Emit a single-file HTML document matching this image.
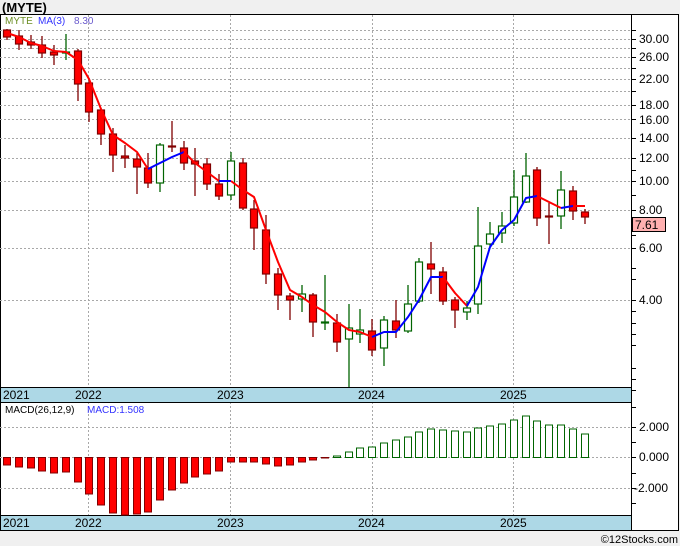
<!DOCTYPE html>
<html><head><style>
html,body{margin:0;padding:0;background:#f0f0f0;}
svg{display:block;font-family:"Liberation Sans","DejaVu Sans",sans-serif;}
</style></head><body>
<svg width="680" height="546" viewBox="0 0 680 546" xmlns="http://www.w3.org/2000/svg">
<rect x="0" y="0" width="680" height="546" fill="#f0f0f0"/>
<text x="2" y="12" font-size="13" font-weight="bold" fill="#000">(MYTE)</text>
<rect x="0.5" y="14.5" width="678" height="516" fill="#fff" stroke="#000"/>
<line x1="631.5" y1="14" x2="631.5" y2="531" stroke="#000"/>
<!-- main grid -->
<g stroke="#a8a8a8" stroke-dasharray="2,2" stroke-width="1">
<line x1="0" y1="30.5" x2="631" y2="30.5"/><line x1="0" y1="39.5" x2="631" y2="39.5"/><line x1="0" y1="48.5" x2="631" y2="48.5"/><line x1="0" y1="57.5" x2="631" y2="57.5"/><line x1="0" y1="68.5" x2="631" y2="68.5"/><line x1="0" y1="79.5" x2="631" y2="79.5"/><line x1="0" y1="91.5" x2="631" y2="91.5"/><line x1="0" y1="105.5" x2="631" y2="105.5"/><line x1="0" y1="119.5" x2="631" y2="119.5"/><line x1="0" y1="138.5" x2="631" y2="138.5"/><line x1="0" y1="158.5" x2="631" y2="158.5"/><line x1="0" y1="181.5" x2="631" y2="181.5"/><line x1="0" y1="210.5" x2="631" y2="210.5"/><line x1="0" y1="248.5" x2="631" y2="248.5"/><line x1="0" y1="300.5" x2="631" y2="300.5"/>
<line x1="88.5" y1="15" x2="88.5" y2="387"/><line x1="230.5" y1="15" x2="230.5" y2="387"/><line x1="372.5" y1="15" x2="372.5" y2="387"/><line x1="513.5" y1="15" x2="513.5" y2="387"/>
<line x1="0" y1="427.5" x2="631" y2="427.5"/><line x1="0" y1="457.5" x2="631" y2="457.5"/><line x1="0" y1="488.5" x2="631" y2="488.5"/>
<line x1="88.5" y1="402" x2="88.5" y2="515"/><line x1="230.5" y1="402" x2="230.5" y2="515"/><line x1="372.5" y1="402" x2="372.5" y2="515"/><line x1="513.5" y1="402" x2="513.5" y2="515"/>
</g>
<!-- axis ticks -->
<g stroke="#000">
<line x1="631" y1="30.5" x2="636" y2="30.5"/><line x1="631" y1="39.5" x2="636" y2="39.5"/><line x1="631" y1="48.5" x2="636" y2="48.5"/><line x1="631" y1="57.5" x2="636" y2="57.5"/><line x1="631" y1="68.5" x2="636" y2="68.5"/><line x1="631" y1="79.5" x2="636" y2="79.5"/><line x1="631" y1="91.5" x2="636" y2="91.5"/><line x1="631" y1="105.5" x2="636" y2="105.5"/><line x1="631" y1="119.5" x2="636" y2="119.5"/><line x1="631" y1="138.5" x2="636" y2="138.5"/><line x1="631" y1="158.5" x2="636" y2="158.5"/><line x1="631" y1="170.5" x2="636" y2="170.5"/><line x1="631" y1="181.5" x2="636" y2="181.5"/><line x1="631" y1="195.5" x2="636" y2="195.5"/><line x1="631" y1="210.5" x2="636" y2="210.5"/><line x1="631" y1="235.5" x2="636" y2="235.5"/><line x1="631" y1="248.5" x2="636" y2="248.5"/><line x1="631" y1="268.5" x2="636" y2="268.5"/><line x1="631" y1="279.5" x2="636" y2="279.5"/><line x1="631" y1="300.5" x2="636" y2="300.5"/><line x1="631" y1="311.5" x2="636" y2="311.5"/><line x1="631" y1="323.5" x2="636" y2="323.5"/><line x1="631" y1="334.5" x2="636" y2="334.5"/><line x1="631" y1="345.5" x2="636" y2="345.5"/><line x1="631" y1="368.5" x2="636" y2="368.5"/><line x1="631" y1="379.5" x2="636" y2="379.5"/><line x1="631" y1="390.5" x2="636" y2="390.5"/>
<line x1="631" y1="407.5" x2="636" y2="407.5"/><line x1="631" y1="427.5" x2="636" y2="427.5"/><line x1="631" y1="442.5" x2="636" y2="442.5"/><line x1="631" y1="457.5" x2="636" y2="457.5"/><line x1="631" y1="473.5" x2="636" y2="473.5"/><line x1="631" y1="488.5" x2="636" y2="488.5"/><line x1="631" y1="503.5" x2="636" y2="503.5"/>
</g>
<g font-size="12" fill="#000">
<text x="639" y="43">30.00</text><text x="639" y="61">26.00</text><text x="639" y="83">22.00</text><text x="639" y="109">18.00</text><text x="639" y="124">16.00</text><text x="639" y="142">14.00</text><text x="639" y="162">12.00</text><text x="639" y="185">10.00</text><text x="639" y="214">8.00</text><text x="639" y="252">6.00</text><text x="639" y="304">4.00</text>
<text x="639" y="431">2.000</text><text x="639" y="461">0.000</text><text x="634" y="492">-2.000</text>
</g>
<rect x="632.5" y="217.5" width="33" height="14" fill="#ffb0b0" stroke="#000"/>
<text x="635" y="229" font-size="12" fill="#000">7.61</text>
<!-- legend -->
<text x="5" y="24" font-size="10" fill="#6b8e23">MYTE</text>
<text x="38" y="24" font-size="10" fill="#3333ff">MA(3)</text>
<text x="74" y="24" font-size="10" fill="#6a5acd">8.30</text>
<!-- wicks -->
<g stroke-width="1.3">
<g stroke="#800000">
<line x1="7" y1="29" x2="7" y2="40"/><line x1="19" y1="30" x2="19" y2="50"/><line x1="31" y1="35" x2="31" y2="49"/><line x1="42" y1="36" x2="42" y2="58"/><line x1="54" y1="45" x2="54" y2="65"/>
<line x1="78" y1="49" x2="78" y2="101"/><line x1="89" y1="78" x2="89" y2="122"/><line x1="101" y1="108" x2="101" y2="145"/><line x1="113" y1="128" x2="113" y2="172"/><line x1="125" y1="145" x2="125" y2="168"/><line x1="137" y1="153" x2="137" y2="194"/><line x1="148" y1="153" x2="148" y2="188"/>
<line x1="172" y1="121" x2="172" y2="152"/><line x1="184" y1="141" x2="184" y2="170"/><line x1="195" y1="148" x2="195" y2="196"/><line x1="207" y1="158" x2="207" y2="190"/><line x1="219" y1="174" x2="219" y2="200"/>
<line x1="243" y1="158" x2="243" y2="210"/><line x1="254" y1="200" x2="254" y2="250"/><line x1="266" y1="215" x2="266" y2="284"/><line x1="278" y1="268" x2="278" y2="310"/><line x1="290" y1="293" x2="290" y2="320"/><line x1="313" y1="293" x2="313" y2="337"/><line x1="337" y1="314" x2="337" y2="352"/><line x1="372" y1="319" x2="372" y2="356"/><line x1="396" y1="300" x2="396" y2="338"/><line x1="431" y1="242" x2="431" y2="294"/><line x1="443" y1="267" x2="443" y2="305"/><line x1="455" y1="297" x2="455" y2="328"/><line x1="537" y1="167" x2="537" y2="226"/><line x1="549" y1="203" x2="549" y2="244"/><line x1="573" y1="186" x2="573" y2="220"/><line x1="585" y1="209" x2="585" y2="224"/>
</g>
<g stroke="#006400">
<line x1="66" y1="34" x2="66" y2="60"/><line x1="160" y1="143" x2="160" y2="192"/><line x1="231" y1="152" x2="231" y2="200"/><line x1="302" y1="285" x2="302" y2="312"/><line x1="325" y1="275" x2="325" y2="330"/><line x1="349" y1="304" x2="349" y2="387"/><line x1="360" y1="309" x2="360" y2="343"/><line x1="384" y1="316" x2="384" y2="366"/><line x1="408" y1="285" x2="408" y2="333"/><line x1="419" y1="258" x2="419" y2="303"/><line x1="467" y1="301" x2="467" y2="320"/><line x1="478" y1="207" x2="478" y2="314"/><line x1="490" y1="222" x2="490" y2="246"/><line x1="502" y1="212" x2="502" y2="243"/><line x1="514" y1="170" x2="514" y2="226"/><line x1="526" y1="153" x2="526" y2="203"/><line x1="561" y1="171" x2="561" y2="229"/>
</g>
</g>
<!-- bodies -->
<g fill="#ff0000" stroke="#800000" stroke-width="1.2">
<rect x="3.5" y="30" width="7" height="7"/><rect x="15.5" y="36" width="7" height="8"/><rect x="27.5" y="42" width="7" height="3"/><rect x="38.5" y="45" width="7" height="8"/><rect x="50.5" y="52" width="7" height="3"/>
<rect x="74.5" y="51" width="7" height="33"/><rect x="85.5" y="83" width="7" height="29"/><rect x="97.5" y="110" width="7" height="24"/><rect x="109.5" y="134" width="7" height="21"/><rect x="121.5" y="156" width="7" height="2"/><rect x="133.5" y="159" width="7" height="8"/><rect x="144.5" y="168" width="7" height="15"/>
<rect x="168.5" y="146" width="7" height="1"/><rect x="180.5" y="148" width="7" height="15"/><rect x="191.5" y="161" width="7" height="3"/><rect x="203.5" y="164" width="7" height="20"/><rect x="215.5" y="184" width="7" height="12"/>
<rect x="239.5" y="163" width="7" height="45"/><rect x="250.5" y="209" width="7" height="19"/><rect x="262.5" y="230" width="7" height="44"/><rect x="274.5" y="274" width="7" height="21"/><rect x="286.5" y="296" width="7" height="4"/><rect x="309.5" y="295" width="7" height="27"/><rect x="333.5" y="323" width="7" height="19"/><rect x="368.5" y="331" width="7" height="19"/><rect x="392.5" y="321" width="7" height="9"/><rect x="427.5" y="264" width="7" height="5"/><rect x="439.5" y="272" width="7" height="29"/><rect x="451.5" y="300" width="7" height="10"/><rect x="533.5" y="170" width="7" height="48"/><rect x="545.5" y="216" width="7" height="1"/><rect x="569.5" y="191" width="7" height="20"/><rect x="581.5" y="212" width="7" height="5"/>
</g>
<g fill="#fff" stroke="#006400" stroke-width="1.2">
<rect x="62.5" y="52" width="7" height="1"/><rect x="156.5" y="145" width="7" height="38"/><rect x="227.5" y="161" width="7" height="34"/><rect x="298.5" y="294" width="7" height="5"/><rect x="321.5" y="322" width="7" height="1"/><rect x="345.5" y="328" width="7" height="11"/><rect x="356.5" y="330" width="7" height="4"/><rect x="380.5" y="320" width="7" height="28"/><rect x="404.5" y="304" width="7" height="27"/><rect x="415.5" y="262" width="7" height="39"/><rect x="463.5" y="308" width="7" height="4"/><rect x="474.5" y="246" width="7" height="58"/><rect x="486.5" y="234" width="7" height="10"/><rect x="498.5" y="226" width="7" height="7"/><rect x="510.5" y="197" width="7" height="26"/><rect x="522.5" y="176" width="7" height="26"/><rect x="557.5" y="190" width="7" height="26"/>
</g>
<!-- MA -->
<g fill="none" stroke-width="2" stroke-linejoin="round">
<polyline stroke="#ff0000" points="7,33 19,37 31,43 42,46 54,51 66,52 78,60 89,79 101,109 113,135 125,143 137,152 148,169"/>
<polyline stroke="#0000ff" points="148,169 160,163 172,157 184,152"/>
<polyline stroke="#ff0000" points="184,152 195,163 207,172 219,181"/>
<polyline stroke="#0000ff" points="219,181 231,181"/>
<polyline stroke="#ff0000" points="231,181 243,190 254,197 266,230 278,262 290,290 302,297 313,305 325,312 337,322 349,330 360,332 372,337"/>
<polyline stroke="#0000ff" points="372,337 384,332 396,332 408,317 419,300 431,277 443,277"/>
<polyline stroke="#ff0000" points="443,277 455,293 467,306"/>
<polyline stroke="#0000ff" points="467,306 478,287 490,247 502,230 514,220 526,198 537,196"/>
<polyline stroke="#ff0000" points="537,196 549,202 561,208"/>
<polyline stroke="#0000ff" points="561,208 573,206"/>
<polyline stroke="#ff0000" points="573,206 585,206"/>
</g>
<!-- date bars -->
<rect x="0.5" y="387.5" width="631" height="15" fill="#add8e6" stroke="#000"/>
<rect x="0.5" y="515.5" width="631" height="15" fill="#add8e6" stroke="#000"/>
<g font-size="12" fill="#000">
<text x="3" y="399">2021</text><text x="75" y="399">2022</text><text x="217" y="399">2023</text><text x="358" y="399">2024</text><text x="500" y="399">2025</text>
<text x="3" y="527">2021</text><text x="75" y="527">2022</text><text x="217" y="527">2023</text><text x="358" y="527">2024</text><text x="500" y="527">2025</text>
</g>
<text x="5" y="413" font-size="10" fill="#000">MACD(26,12,9)</text>
<text x="87" y="413" font-size="10" fill="#3333ff">MACD:1.508</text>
<!-- MACD bars -->
<g fill="#ff0000" stroke="#800000" stroke-width="1">
<rect x="3.5" y="457.5" width="7" height="7.5"/><rect x="15.5" y="457.5" width="7" height="9.5"/><rect x="27.5" y="457.5" width="7" height="10.5"/><rect x="38.5" y="457.5" width="7" height="13.5"/><rect x="50.5" y="457.5" width="7" height="15.5"/><rect x="62.5" y="457.5" width="7" height="14.5"/><rect x="74.5" y="457.5" width="7" height="24.5"/><rect x="85.5" y="457.5" width="7" height="36.5"/><rect x="97.5" y="457.5" width="7" height="47.5"/><rect x="109.5" y="457.5" width="7" height="55.5"/><rect x="121.5" y="457.5" width="7" height="57.5"/><rect x="133.5" y="457.5" width="7" height="56.5"/><rect x="144.5" y="457.5" width="7" height="54.5"/><rect x="156.5" y="457.5" width="7" height="42.5"/><rect x="168.5" y="457.5" width="7" height="32.5"/><rect x="180.5" y="457.5" width="7" height="25.5"/><rect x="191.5" y="457.5" width="7" height="19.5"/><rect x="203.5" y="457.5" width="7" height="16.5"/><rect x="215.5" y="457.5" width="7" height="13.5"/><rect x="227.5" y="457.5" width="7" height="4.5"/><rect x="239.5" y="457.5" width="7" height="4.5"/><rect x="250.5" y="457.5" width="7" height="4.5"/><rect x="262.5" y="457.5" width="7" height="6.5"/><rect x="274.5" y="457.5" width="7" height="8.5"/><rect x="286.5" y="457.5" width="7" height="7.5"/><rect x="298.5" y="457.5" width="7" height="4.5"/><rect x="309.5" y="457.5" width="7" height="2.5"/><rect x="321.5" y="457.5" width="7" height="0.5"/>
</g>
<g fill="#fff" stroke="#006400" stroke-width="1">
<rect x="333.5" y="456" width="7" height="1.5"/><rect x="345.5" y="452" width="7" height="5.5"/><rect x="356.5" y="448" width="7" height="9.5"/><rect x="368.5" y="447" width="7" height="10.5"/><rect x="380.5" y="443" width="7" height="14.5"/><rect x="392.5" y="440" width="7" height="17.5"/><rect x="404.5" y="437" width="7" height="20.5"/><rect x="415.5" y="432" width="7" height="25.5"/><rect x="427.5" y="429" width="7" height="28.5"/><rect x="439.5" y="430" width="7" height="27.5"/><rect x="451.5" y="431" width="7" height="26.5"/><rect x="463.5" y="432" width="7" height="25.5"/><rect x="474.5" y="428" width="7" height="29.5"/><rect x="486.5" y="426" width="7" height="31.5"/><rect x="498.5" y="424" width="7" height="33.5"/><rect x="510.5" y="420" width="7" height="37.5"/><rect x="522.5" y="416" width="7" height="41.5"/><rect x="533.5" y="421" width="7" height="36.5"/><rect x="545.5" y="425" width="7" height="32.5"/><rect x="557.5" y="425" width="7" height="32.5"/><rect x="569.5" y="429" width="7" height="28.5"/><rect x="581.5" y="434" width="7" height="23.5"/>
</g>
<text x="678" y="543" font-size="11" fill="#000" text-anchor="end">©12Stocks.com</text>
</svg>
</body></html>
